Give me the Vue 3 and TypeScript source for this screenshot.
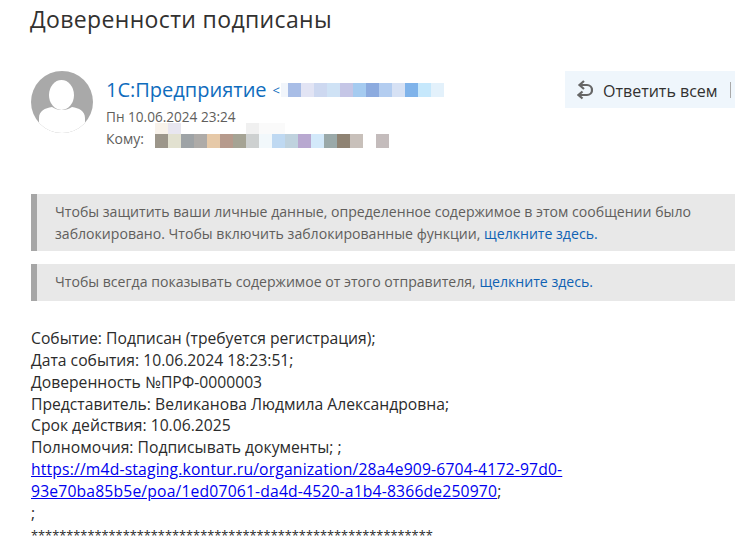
<script setup lang="ts">
const senderCells = ['#a8bde6','#e2e4f4','#cdd8f0','#cfe2f5','#c5c6e6','#a5cbf0','#8cabdf','#b3cdf0','#d6e1f4','#7fb3ea','#c6e8fc','#e3f1fb']
const toCells = ['#9c968a','#e2e1d0','#9ea3a6','#aeaba8','#e6c9a8','#b69a8c','#a5a394','#cdd0d0','#f2f8fb','#bfd9f2','#bfd2de','#b8a8d0','#d3e9fa','#9aa9a9','#8f8373','#c8c0ba','#ffffff','#c4bcbc']
const toFaint = ['#f8f2ea','#e8e6f0','transparent','transparent','transparent','transparent','transparent','#f0f0f0','#fafafa','#fafafa']
const lines = ['Событие: Подписан (требуется регистрация);','Дата события: 10.06.2024 18:23:51;','Доверенность №ПРФ-0000003','Представитель: Великанова Людмила Александровна;','Срок действия: 10.06.2025','Полномочия: Подписывать документы; ;']
const stars = '*'.repeat(57)
</script>

<template>
  <main class="page">
    <h1 class="title">Доверенности подписаны</h1>
    <header class="head">
      <svg class="avatar" viewBox="0 0 62 62" aria-hidden="true">
        <defs><clipPath id="c"><circle cx="31" cy="31" r="31" /></clipPath></defs>
        <circle cx="31" cy="31" r="31" fill="#a9a9a9" />
        <g clip-path="url(#c)" fill="#fff">
          <ellipse cx="30.5" cy="24" rx="12.5" ry="15" />
          <path d="M8 62V47c0-7 6-10 13-11 3 2 6 3 10 3s7-1 10-3c7 1 13 4 13 11v15z" />
        </g>
      </svg>
      <div class="meta">
        <div class="sender">
          <span class="name">1С:Предприятие</span>
          <span class="lt">&lt;</span>
          <span class="cells sender-cells"><i v-for="c in senderCells" :key="c" :style="{ background: c }"></i></span>
        </div>
        <div class="date">Пн 10.06.2024 23:24</div>
        <div class="to">
          <span class="to-label">Кому:</span>
          <span class="cells to-cells">
            <i v-for="(c, n) in toCells" :key="n" :style="{ background: c }"></i>
            <span class="faint"><i v-for="(c, n) in toFaint" :key="n" :style="{ background: c }"></i></span>
          </span>
        </div>
      </div>
      <div class="reply">
        <svg class="reply-icon" viewBox="0 0 16 20" aria-hidden="true">
          <path d="M7 1 2.5 5 7 9M2.5 5H10a5 5 0 0 1 0 10H2M5.5 11.5 1.5 15l4 3.5" fill="none" stroke="#666" stroke-width="2.2" />
        </svg>
        <span class="reply-text">Ответить всем</span>
        <span class="sep"></span>
      </div>
    </header>
    <section class="notices">
      <p class="notice tall">Чтобы защитить ваши личные данные, определенное содержимое в этом сообщении было заблокировано. Чтобы включить заблокированные функции, <a>щелкните здесь.</a></p>
      <p class="notice">Чтобы всегда показывать содержимое от этого отправителя, <a>щелкните здесь.</a></p>
    </section>
    <article class="body">
      <div v-for="l in lines" :key="l">{{ l }}</div>
      <div><a class="link" href="#">https://m4d-staging.kontur.ru/organization/28a4e909-6704-4172-97d0-<br />93e70ba85b5e/poa/1ed07061-da4d-4520-a1b4-8366de250970</a>;</div>
      <div>;</div>
      <div class="stars">{{ stars }}</div>
    </article>
  </main>
</template>

<style>
html, body { margin: 0; background: #fff; overflow: hidden; }
</style>
<style scoped>
.page { width: 735px; height: 549px; overflow: hidden; font-family: "Open Sans", "Noto Sans", sans-serif; color: #262626; }
.title { margin: 0; padding: 2px 0 0 30px; font-size: 23px; line-height: 35px; font-weight: 400; color: #323130; letter-spacing: .35px; }
.head { display: flex; margin-top: 34px; height: 72px; }
.avatar { width: 62px; height: 62px; margin-left: 31px; flex: none; }
.meta { margin-left: 13px; flex: 1; }
.sender { display: flex; align-items: center; height: 38px; }
.name { font-size: 20px; line-height: 38px; color: #0f6cbd; }
.lt { font-size: 13px; color: #0f6cbd; margin-left: 6px; }
.cells { display: flex; }
.cells i { display: block; width: 13px; height: 14px; flex: none; }
.sender-cells { margin-left: 1px; padding-left: 7px; background: #f1f5fb; height: 14px; }
.date { font-size: 13.6px; line-height: 17px; color: #605e5c; margin-top: -1px; }
.to { display: flex; font-size: 14px; line-height: 17px; color: #605e5c; margin-top: 5px; }
.to-label { width: 49px; }
.to-cells { position: relative; margin-top: 4px; }
.faint { position: absolute; left: 0; top: -11px; display: flex; }
.faint i { height: 11px; }
.reply { width: 170px; height: 37px; background: #eff6fc; display: flex; align-items: center; flex: none; }
.reply-icon { width: 16px; height: 20px; margin-left: 12px; }
.reply-text { font-size: 16px; color: #323130; margin-left: 10px; white-space: nowrap; padding-top: 3px; }
.sep { width: 1px; height: 16px; background: #a9a9a9; margin-left: 12px; }
.notices { margin-top: 51px; margin-left: 31px; display: flex; flex-direction: column; gap: 13px; }
.notice { margin: 0; background: #e8e8e8; border-left: 6px solid #a6a6a6; padding: 7px 12px 8px 18px; font-size: 14.1px; line-height: 22px; color: #605e5c; white-space: nowrap; }
.notice.tall { padding: 7px 12px 6px 18px; white-space: normal; }
.notice a { color: #0f62b4; }
.body { margin-top: 27px; margin-left: 31px; font-size: 15.7px; line-height: 21.85px; white-space: nowrap; color: #2b2b2b; }
.link { color: #0000ee; letter-spacing: .17px; }
.stars { font-size: 12.8px; }
</style>
